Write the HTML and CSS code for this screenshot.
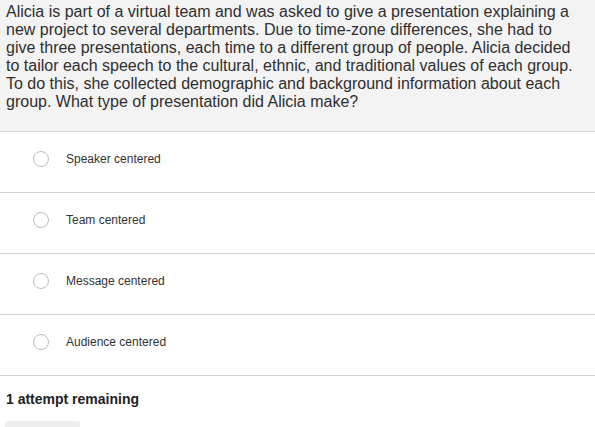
FILE: index.html
```html
<!DOCTYPE html>
<html>
<head>
<meta charset="utf-8">
<link rel="stylesheet" href="styles.css">
</head>
<body>
<div class="question">
  <div class="prompt">Alicia is part of a virtual team and was asked to give a presentation explaining a new project to several departments. Due to time-zone differences, she had to give three presentations, each time to a different group of people. Alicia decided to tailor each speech to the cultural, ethnic, and traditional values of each group. To do this, she collected demographic and background information about each group. What type of presentation did Alicia make?</div>
  <ul class="options">
    <li class="option"><span class="radio"></span><span class="label">Speaker centered</span></li>
    <li class="option"><span class="radio"></span><span class="label">Team centered</span></li>
    <li class="option"><span class="radio"></span><span class="label">Message centered</span></li>
    <li class="option"><span class="radio"></span><span class="label">Audience centered</span></li>
  </ul>
  <div class="attempts">1 attempt remaining</div>
  <div class="actions"><span class="button"></span></div>
</div>
</body>
</html>
```
FILE: styles.css
```css
html, body {
  margin: 0;
  padding: 0;
  background: #ffffff;
  overflow: hidden;
}
body {
  width: 595px;
  height: 427px;
  font-family: "Liberation Sans", Arial, sans-serif;
  color: #333333;
}
.prompt {
  background: #f3f3f3;
  font-size: 16px;
  line-height: 18px;
  padding: 3px 20px 20px 6px;
  border-bottom: 1px solid #d2d2d2;
  color: #2f2f2f;
}
.options {
  list-style: none;
  margin: 0;
  padding: 0;
}
.option {
  display: flex;
  align-items: center;
  height: 20px;
  padding: 17px 0 23px 0;
  border-bottom: 1px solid #d2d2d2;
}
.radio {
  width: 14px;
  height: 14px;
  border: 1px solid #bdbdbd;
  border-radius: 50%;
  background: #fff;
  margin-left: 33px;
  margin-right: 17px;
  flex: none;
}
.label {
  font-size: 12px;
  color: #333;
}
.attempts {
  font-size: 14px;
  font-weight: bold;
  line-height: 20px;
  margin-top: 13px;
  padding-left: 6px;
  color: #222;
}
.actions {
  padding-left: 5px;
  margin-top: 12px;
}
.button {
  display: block;
  width: 75px;
  height: 6px;
  background: #eeeeee;
  border-radius: 3px 3px 0 0;
}
```
